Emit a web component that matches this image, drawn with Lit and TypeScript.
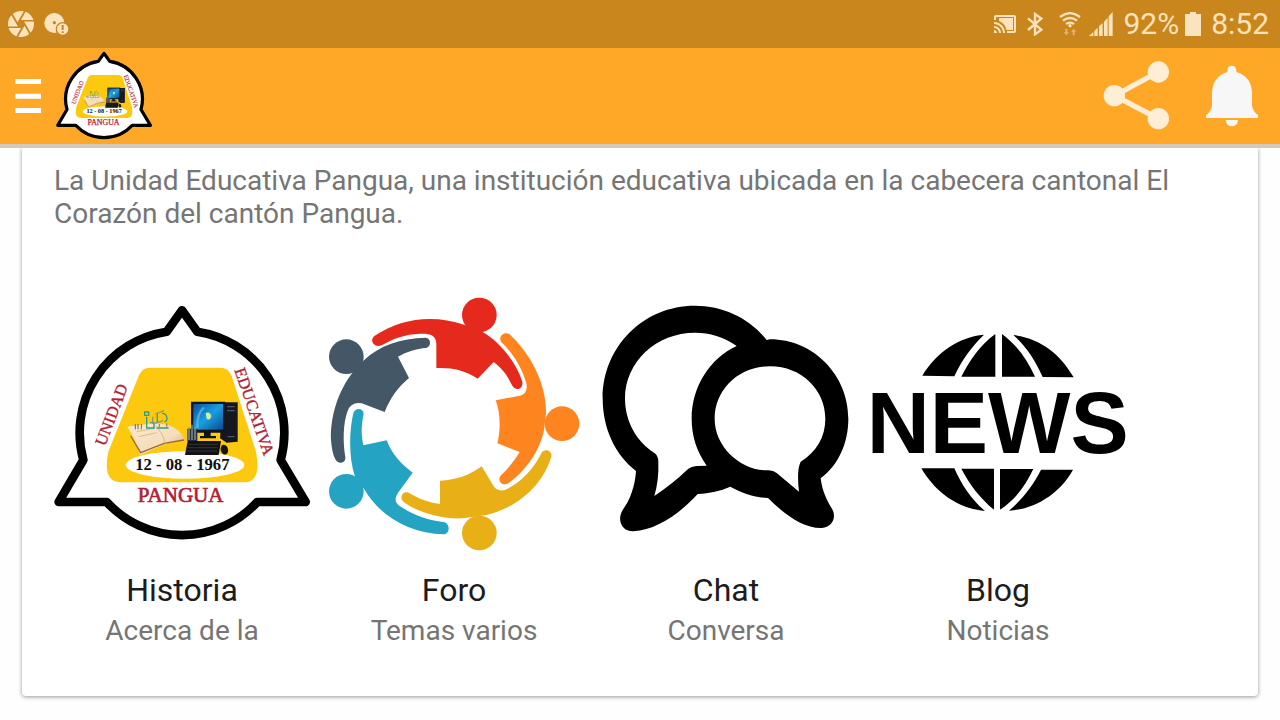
import { LitElement, html, css, svg } from "lit";
import { customElement, property } from "lit/decorators.js";

@customElement("school-badge")
export class SchoolBadge extends LitElement {
  static styles = css`
    :host { display: block; }
    svg { display: block; width: 100%; height: 100%; }
    .name { font-family: "Liberation Serif", serif; fill: #b3202f; stroke: #b3202f; }
    .town { font-size: 63px; stroke-width: 2px; }
    .side { font-size: 49px; stroke-width: 1px; }
    .date { font-family: "Liberation Serif", serif; font-weight: 700; font-size: 50px; fill: #111; }
  `;

  render() {
    return html`
      <svg viewBox="42 18 768 768" role="img" aria-label="Unidad Educativa Pangua">
        <defs>
          <linearGradient id="screen" x1="0" y1="0" x2="1" y2="1">
            <stop offset="0" stop-color="#0b4f9c" /><stop offset=".5" stop-color="#19a0e0" /><stop offset="1" stop-color="#0a4a94" />
          </linearGradient>
          <linearGradient id="page" x1="0" y1="0" x2="1" y2="1">
            <stop offset="0" stop-color="#fbe9cd" /><stop offset=".6" stop-color="#f6ddbb" /><stop offset="1" stop-color="#c99a63" />
          </linearGradient>
        </defs>
        <path d="M426 61L472 125A307 307 0 0 1 722 510L797 636H652A307 307 0 0 1 200 636H56L130 510A307 307 0 0 1 380 125Z"
          fill="#fff" stroke="#000" stroke-width="26" stroke-linejoin="round" />
        <path d="M330 233H540Q566 233 575 258L648 485Q666 577 612 577H243Q186 577 205 485L296 258Q306 233 330 233Z" fill="#fdc90f" />
        <ellipse cx="435" cy="525" rx="178" ry="41" fill="#fff" />
        <path d="M262 410L340 400L382 404Q425 420 432 447L372 463L300 496Q288 450 262 410Z" fill="url(#page)" />
        <path d="M272 438L302 488L372 460L432 450" fill="none" stroke="#9a6a3c" stroke-width="4" />
        <path d="M340 402Q368 425 376 460M290 425L345 415M296 440L350 428" fill="none" stroke="#dcbb93" stroke-width="3" />
        <path d="M286 402V418M294 402V418M304 402V418" stroke="#566a7c" stroke-width="3" />
        <path d="M314 366H326V376H314ZM320 380V414H342V398H330M350 414H386M352 370V398M366 370A14 14 0 0 1 374 396" fill="none" stroke="#2f9e8c" stroke-width="4" />
        <path d="M338 380V402M346 372L372 362M345 400L370 392M380 400V416M358 402V414" stroke="#8c9a70" stroke-width="4" fill="none" />
        <path d="M548 337H593V455L560 458L540 445Z" fill="#151820" />
        <path d="M561 350H584M561 362H584M563 440H584" stroke="#4c566b" stroke-width="4" />
        <path d="M453 335H556V428H453Z" fill="#10141c" />
        <path d="M460 342H549V419H460Z" fill="url(#screen)" />
        <path d="M497 370Q508 362 514 378Q510 394 500 386Z" fill="#d6ed9c" />
        <path d="M472 416Q470 370 492 352" fill="none" stroke="#70c9ed" stroke-width="7" opacity=".6" />
        <path d="M492 426H512V438H528V445H480V438H492Z" fill="#121212" />
        <path d="M442 416H472V453H442Z" fill="#27313e" />
        <path d="M447 450V412M456 450V404M465 450V412" stroke="#8c99a5" stroke-width="4" />
        <path d="M443 453H543L536 495H435Z" fill="#131315" />
        <path d="M446 463H534M443 473H532M440 483H531" stroke="#41434a" stroke-width="2" />
        <ellipse cx="553" cy="479" rx="11" ry="15" fill="#151515" transform="rotate(-15 553 479)" />
        <text class="date" x="427" y="539" text-anchor="middle">12 - 08 - 1967</text>
        <text class="name town" x="422" y="636" text-anchor="middle">PANGUA</text>
        <text class="name side" transform="translate(195 470) rotate(-69)">UNIDAD</text>
        <text class="name side" transform="translate(583 240) rotate(71)">EDUCATIVA</text>
      </svg>`;
  }
}

const foroArt = svg`
  <g fill="#e52a1d"><circle cx="478" cy="75" r="52" />
    <path d="M163 138C240 85 340 72 432 104L488 126C540 155 590 220 607 275C610 300 585 304 576 286C562 255 548 238 521 216L473 266C435 240 395 232 349 234V165C350 135 330 130 300 131C255 133 220 145 185 166C160 175 148 150 163 138Z" /></g>
  <g fill="#435766"><circle cx="79" cy="200" r="52" />
    <path d="M318 143C240 145 180 165 130 212L100 245C55 300 30 380 33 450Q36 490 46 508C55 525 78 520 76 502C68 450 70 400 82 365Q92 335 125 340L194 366C210 325 235 290 267 264L234 200C260 185 290 176 318 174A16 16 0 0 0 318 143Z" /></g>
  <g fill="#24a3c3"><circle cx="79" cy="604" r="52" />
    <path d="M100 370C88 420 85 500 105 560L133 598C180 680 270 730 372 733C392 730 390 698 370 696C330 693 280 675 250 655Q215 640 233 610L278 548C240 520 215 490 200 451L130 466C122 430 125 400 131 372C130 352 105 352 100 370Z" /></g>
  <g fill="#e8af17"><circle cx="478" cy="729" r="52" />
    <path d="M266 608C295 625 325 637 360 642V572C410 570 450 555 485 529L522 590Q535 605 555 600C600 580 640 540 664 490C672 474 697 480 694 500C670 580 600 650 500 675L430 685C360 688 290 665 250 635C236 620 250 602 266 608Z" /></g>
  <g fill="#fd841f"><circle cx="726" cy="401" r="52" />
    <path d="M568 132C630 190 680 280 678 370L672 420C660 480 620 540 565 580C545 590 530 570 543 556C565 535 585 510 599 486L532 460C542 420 542 370 527 331L600 317Q625 310 619 280C605 230 575 185 543 155C535 140 550 123 568 132Z" /></g>`;

const chatArt = svg`
  <path d="M530 150C480 85 400 47 315 47C160 47 38 170 38 325C38 415 75 495 138 543C135 590 120 630 98 660C80 690 95 725 130 724C200 720 270 670 323 612C360 610 390 603 421 590C460 612 495 622 534 624C585 675 640 715 695 714C730 710 738 680 728 660C710 630 697 605 692 565C745 525 775 460 775 386C775 255 670 148 540 148Z" />
  <path fill="#fff" d="M440 168C400 140 360 128 315 128C200 128 105 215 105 325C105 395 140 455 192 488Q205 496 205 515Q207 570 193 618Q250 580 290 541Q302 529 320 528L350 527C320 485 305 440 305 385C305 290 360 205 440 168Z" />
  <path fill="#fff" d="M540 229C445 229 374 300 374 386C374 470 450 540 530 541Q548 539 560 549L627 605C623 570 622 535 632 515C680 485 706 440 706 386C706 300 635 229 540 229Z" />`;

const newsArt = svg`
  <path d="M187 167C230 95 300 50 372 44C335 80 305 120 283 169ZM304 170C330 120 360 75 406 42V170ZM426 42C470 75 500 115 525 170H426ZM460 45C540 55 600 100 641 172L548 171C525 120 500 80 460 45Z" />
  <path d="M184 445H283C305 495 335 540 375 573C290 565 225 515 184 445ZM304 446H402V569C360 535 330 495 304 446ZM420 447H520C495 500 465 540 420 569ZM543 449H639C600 520 525 568 447 572C490 535 520 495 543 449Z" />
  <text class="news" x="413" y="399" text-anchor="middle">NEWS</text>`;

@customElement("menu-tile")
export class MenuTile extends LitElement {
  @property() heading = "";
  @property() caption = "";
  @property() art = "";

  static styles = css`
    :host { display: block; }
    a { display: flex; flex-direction: column; align-items: center; color: inherit; text-decoration: none; }
    .art { display: block; width: 100%; aspect-ratio: 1; overflow: visible; }
    .heading { margin: 19px 0 0; font-size: 32px; line-height: 38px; font-weight: 400; color: #1c1c1c; }
    .caption { margin: 5px 0 0; font-size: 28px; line-height: 33px; color: #757575; }
    .news { font-family: "Liberation Sans", sans-serif; font-weight: 700; font-size: 262px; }
  `;

  private picture() {
    switch (this.art) {
      case "foro":
        return html`<svg class="art" viewBox="18 18 768 768" aria-hidden="true">${foroArt}</svg>`;
      case "chat":
        return html`<svg class="art" viewBox="24 18 768 768" aria-hidden="true">${chatArt}</svg>`;
      case "blog":
        return html`<svg class="art" viewBox="30 -72 768 768" aria-hidden="true">${newsArt}</svg>`;
      default:
        return html`<school-badge class="art"></school-badge>`;
    }
  }

  render() {
    return html`
      <a href="#${this.art}">
        ${this.picture()}
        <h2 class="heading">${this.heading}</h2>
        <p class="caption">${this.caption}</p>
      </a>`;
  }
}

@customElement("status-bar")
export class StatusBar extends LitElement {
  static styles = css`
    :host {
      display: flex; align-items: center; justify-content: space-between;
      height: 48px; padding: 0 11px 0 8px; box-sizing: border-box;
      background: #c9861d; color: #fbe3bd; font-size: 30px; line-height: 36px;
    }
    .group { display: flex; align-items: center; gap: 10px; }
    .tight { gap: 6px; }
    .radio { gap: 8px; }
    svg { display: block; fill: currentColor; }
    .wifi { margin-left: 6px; }
  `;

  render() {
    return html`
      <div class="group">
        <svg width="26" height="26" viewBox="2 2 20 20" aria-hidden="true">
          <path d="M9.4 10.5l4.77-8.26C13.47 2.09 12.75 2 12 2c-2.4 0-4.6.85-6.32 2.25l3.66 6.35.06-.1zM21.54 9c-.92-2.92-3.15-5.26-6-6.34L11.88 9h9.66zm.26 1h-7.49l.29.5 4.76 8.25C21 16.97 22 14.61 22 12c0-.69-.07-1.35-.2-2zM8.54 12l-3.9-6.75C3.01 7.03 2 9.39 2 12c0 .69.07 1.35.2 2h7.49l-1.15-2zm-6.08 3c.92 2.92 3.15 5.26 6 6.34L12.12 15H2.46zm11.27 0l-3.9 6.76c.7.15 1.42.24 2.17.24 2.4 0 4.6-.85 6.32-2.25l-3.66-6.35-.93 1.6z" />
        </svg>
        <svg width="26" height="24" viewBox="134 36 78 72" aria-hidden="true">
          <circle cx="165" cy="69" r="30" />
          <circle cx="165" cy="68" r="5" fill="#c9861d" />
          <circle cx="190" cy="87" r="21" fill="#c9861d" />
          <circle cx="190" cy="87" r="17" />
          <path d="M187 75H193V90H187ZM187 94H193V99H187Z" fill="#c9861d" />
        </svg>
      </div>
      <div class="group">
        <div class="group radio">
          <svg width="24" height="24" viewBox="0 0 24 24" aria-hidden="true">
            <path d="M1 18v3h3c0-1.66-1.34-3-3-3zm0-4v2c2.76 0 5 2.24 5 5h2c0-3.87-3.13-7-7-7zM20 6H6V9C10 10.500 12.500 14 13.500 18H20V6zM1 10v2c4.97 0 9 4.03 9 9h2c0-6.08-4.93-11-11-11zm20-7H3c-1.1 0-2 .9-2 2v3h2V5h18v14h-7v2h7c1.1 0 2-.9 2-2V5c0-1.1-.9-2-2-2z" />
          </svg>
          <svg width="20" height="24" viewBox="139 36 60 72" aria-hidden="true">
            <path d="M148 55L188 89L169 103V42L188 56L148 90" fill="none" stroke="currentColor" stroke-width="7" />
          </svg>
          <svg class="wifi" width="22" height="24" viewBox="238 36 66 72" aria-hidden="true">
            <g fill="none" stroke="currentColor" stroke-width="7"><path d="M241 51Q271 28 301 51M250 62Q271 46 292 62M259 72Q271 64 283 72" /></g>
            <circle cx="271" cy="77" r="5" />
            <path opacity=".5" d="M257 86H263V97H268L260 106L252 97H257ZM279 106H285V95H290L282 86L274 95H279Z" />
          </svg>
          <svg width="24" height="24" viewBox="328 36 72 72" aria-hidden="true">
            <path d="M328 108L341 96V108ZM344 93L354 83V108H344ZM358 79L369 69V108H358ZM373 65L384 53V108H373ZM387 49L399 36V108H387Z" />
          </svg>
        </div>
        <div class="group tight">
          <span>92%</span>
          <svg width="16" height="24" viewBox="0 0 16 24" aria-hidden="true">
            <path d="M5 0H11V2H16V24H0V2H5Z" />
          </svg>
        </div>
        <span>8:52</span>
      </div>`;
  }
}

@customElement("app-root")
export class AppRoot extends LitElement {
  static styles = css`
    :host {
      display: block; min-height: 100vh; background: #fefefe;
      font-family: Roboto, "Noto Sans", sans-serif;
    }
    .toolbar {
      display: flex; align-items: center; height: 96px;
      background: #ffa726; border-bottom: 4px solid #d4cabb;
    }
    .toolbar button { display: block; padding: 0; border: 0; background: none; cursor: pointer; }
    .toolbar svg { display: block; }
    .logo { width: 96px; height: 96px; }
    .actions { display: flex; margin-left: auto; }
    .card {
      margin: 0 22px 24px; padding: 16px 32px 49px;
      background: #fff; border-radius: 0 0 4px 4px;
      box-shadow: 0 1px 4px rgba(0, 0, 0, 0.4);
      clip-path: inset(0 -8px -8px -8px);
    }
    .intro { margin: 0; font-size: 28px; line-height: 33px; color: #757575; }
    .tiles { display: grid; grid-template-columns: repeat(auto-fill, 256px); gap: 16px; margin-top: 66px; }
  `;

  private tiles = [
    { art: "historia", heading: "Historia", caption: "Acerca de la" },
    { art: "foro", heading: "Foro", caption: "Temas varios" },
    { art: "chat", heading: "Chat", caption: "Conversa" },
    { art: "blog", heading: "Blog", caption: "Noticias" },
  ];

  render() {
    return html`
      <status-bar></status-bar>
      <header class="toolbar">
        <button type="button" aria-label="Menú">
          <svg width="56" height="96" viewBox="0 144 168 288" fill="#fff">
            <path d="M46 237H123V252H46ZM46 281H123V296H46ZM46 324H123V339H46Z" />
          </svg>
        </button>
        <school-badge class="logo"></school-badge>
        <div class="actions">
          <button type="button" aria-label="Compartir">
            <svg width="96" height="96" viewBox="324 144 288 288" fill="#ffeed6">
              <path d="M535 216L403 287L535 356" fill="none" stroke="#ffeed6" stroke-width="16" />
              <circle cx="535" cy="216" r="32" /><circle cx="403" cy="287" r="32" /><circle cx="535" cy="356" r="32" />
            </svg>
          </button>
          <button type="button" aria-label="Notificaciones">
            <svg width="96" height="96" viewBox="612 144 288 288" fill="#f7f7f7">
              <path d="M742 216V210Q743 197 755 197Q768 197 769 210V216Q815 230 816 280V317Q818 332 834 346V354H678V346Q694 332 696 317V280Q697 230 742 216ZM737 360H774Q772 379 755 379Q740 379 737 360Z" />
            </svg>
          </button>
        </div>
      </header>
      <main class="card">
        <p class="intro">La Unidad Educativa Pangua, una institución educativa ubicada en la cabecera cantonal El Corazón del cantón Pangua.</p>
        <nav class="tiles" aria-label="Secciones">
          ${this.tiles.map((t) => html`<menu-tile art=${t.art} heading=${t.heading} caption=${t.caption}></menu-tile>`)}
        </nav>
      </main>`;
  }
}
